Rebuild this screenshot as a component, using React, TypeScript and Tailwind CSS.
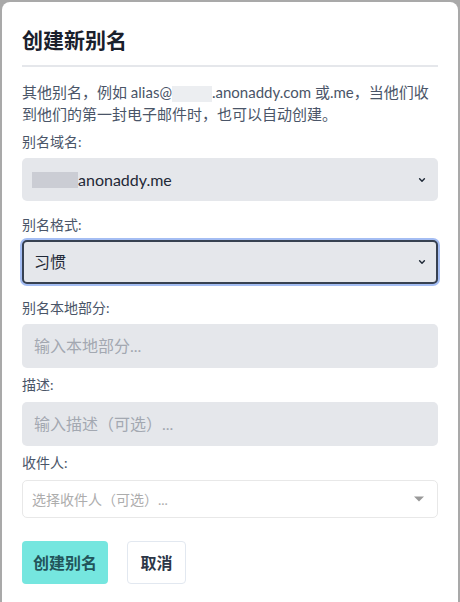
const font = { fontFamily: 'Lato, "Noto Sans CJK SC", sans-serif' };

function Chevron() {
  return (
    <svg width="12" height="12" viewBox="0 0 20 20" fill="none" stroke="#1f2937" strokeWidth="2.4" strokeLinecap="round" strokeLinejoin="round">
      <path d="M6 8l4 4 4-4" />
    </svg>
  );
}

export default function App() {
  return (
    <div className="w-[460px] h-[602px] bg-[#a9a9a9] pt-[2px] px-[2px] overflow-hidden" style={font}>
      <div className="h-[620px] bg-white rounded-t-[8px] px-5 pt-[23px]">
        <h1 className="text-[21px] leading-[30px] font-bold text-[#1a202c]">创建新别名</h1>
        <div className="mt-[10px] h-[2px] bg-[#e5e7eb]" />
        <p className="mt-[14px] text-[15px] leading-[22px] text-[#4a5568]">
          <span>其他别名，例如 alias@</span>
          <span className="inline-block w-[40px] h-[16px] align-middle bg-[#eceef1]" />
          <span>.anonaddy.com 或.me，当他们收到他们的第一封电子邮件时，也可以自动创建。</span>
        </p>

        <label className="block mt-[7px] text-[14px] leading-[20px] text-[#4a5568]">别名域名:</label>
        <div className="mt-[6px] h-[43px] rounded-[5px] bg-[#e5e7eb] flex items-center pl-[10px] pr-[10px]">
          <span className="w-[46px] h-[16px] bg-[#cbcdd4]" />
          <span className="text-[16px] text-[#1f2937]">anonaddy.me</span>
          <span className="ml-auto"><Chevron /></span>
        </div>

        <label className="block mt-[14px] text-[14px] leading-[20px] text-[#4a5568]">别名格式:</label>
        <div className="mt-[5px] h-[44px] rounded-[5px] bg-[#e5e7eb] border-2 border-[#374151] ring-2 ring-[#a4bdf3] flex items-center pl-[10px] pr-[8px]">
          <span className="text-[16px] text-[#1f2937]">习惯</span>
          <span className="ml-auto"><Chevron /></span>
        </div>

        <label className="block mt-[14px] text-[14px] leading-[20px] text-[#4a5568]">别名本地部分:</label>
        <div className="mt-[6px] h-[44px] rounded-[5px] bg-[#e5e7eb] flex items-center pl-[12px] text-[16px] text-[#a3a8b1]">
          输入本地部分...
        </div>

        <label className="block mt-[7px] text-[14px] leading-[20px] text-[#4a5568]">描述:</label>
        <div className="mt-[7px] h-[44px] rounded-[5px] bg-[#e5e7eb] flex items-center pl-[12px] text-[16px] text-[#a3a8b1]">
          输入描述（可选）...
        </div>

        <label className="block mt-[7px] text-[14px] leading-[20px] text-[#4a5568]">收件人:</label>
        <div className="mt-[7px] h-[38px] rounded-[5px] bg-white border border-[#e8e8e8] flex items-center pl-[9px] pr-[12px] text-[14px] text-[#adadad]">
          选择收件人（可选）...
          <svg className="ml-auto" width="12" height="8" viewBox="0 0 12 8">
            <path d="M1 1.5h10L6 6.5z" fill="#999" />
          </svg>
        </div>

        <div className="mt-[23px] flex gap-[19px]">
          <button className="h-[43px] w-[86px] rounded-[4px] bg-[#75e6df] text-[16px] font-bold text-[#22545a]">创建别名</button>
          <button className="h-[43px] w-[59px] rounded-[4px] bg-white border border-[#e2e8f0] text-[16px] font-bold text-[#2d3748]">取消</button>
        </div>
      </div>
    </div>
  );
}
